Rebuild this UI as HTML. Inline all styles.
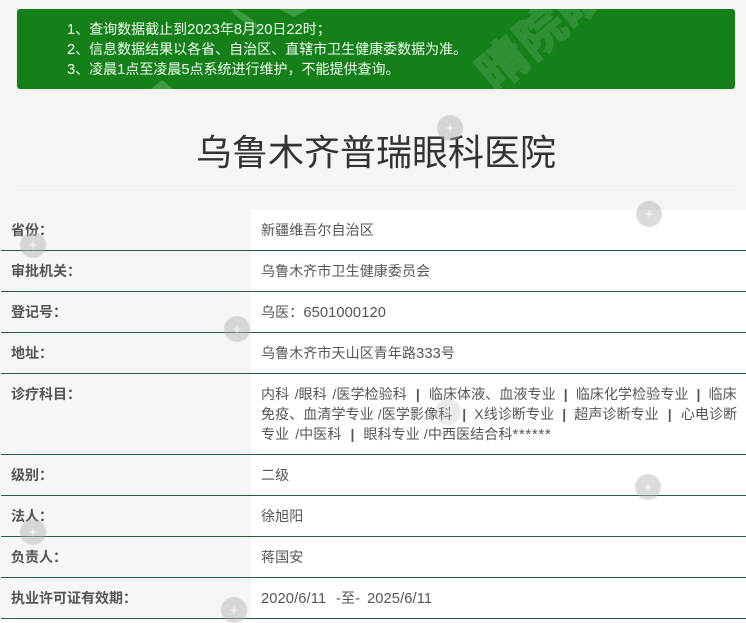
<!DOCTYPE html>
<html lang="zh">
<head>
<meta charset="utf-8">
<title>乌鲁木齐普瑞眼科医院</title>
<style>
html,body{margin:0;padding:0;background:#fff}
body{position:relative;width:746px;height:619px;overflow:hidden;font-family:"Liberation Sans","Noto Sans CJK SC",sans-serif;font-size:14px;color:#444}
.a{position:absolute;white-space:nowrap}
.top{left:0;top:0;width:746px;height:210px;background:#f5f5f5}
.left{left:0;top:210px;width:251px;height:409px;background:#f6f6f6}
.banner{left:17px;top:9px;width:718px;height:80px;background:#15801a;border-radius:3px;overflow:hidden;box-shadow:0 0 1px #bfe0bf}
.bt{left:67px;color:#f0fff0;line-height:20px;height:20px}
h1{margin:0;font-weight:400;font-size:36px;line-height:46px;color:#333;left:196px;top:130px}
.hr{left:15px;top:189px;width:721px;height:1px;background:#eee}
.line{left:1px;width:745px;height:1px;background:#2b5f45}
.l{left:11px;font-weight:700;color:#555;font-size:14px;line-height:20px}
.v{left:261px;color:#555;line-height:20px;letter-spacing:.1px}
.n{font-size:14.7px}
.wm{position:absolute;width:26px;height:26px;border-radius:50%;background:rgba(175,175,175,.45);filter:blur(.5px)}
.wm:after{content:"";position:absolute;left:8px;top:8px;width:10px;height:10px;background:#f0f0f0;clip-path:polygon(50% 0,60% 40%,100% 50%,60% 60%,50% 100%,40% 60%,0 50%,40% 40%)}
.gw{color:#2f9036;font-weight:700;font-size:48px;line-height:50px;transform:rotate(-40deg);transform-origin:center;-webkit-text-stroke:2px #2f9036}
.sep{font-weight:700;display:inline-block}
</style>
</head>
<body>
<div class="a top"></div>
<div class="a left"></div>

<div class="a banner">
  <svg class="a" style="left:0;top:0" width="718" height="80">
    <path d="M218 0 Q236 8 245 22 Q228 16 214 2Z" fill="#3c9a41"/>
    <path d="M262 0 L277 8 L292 0Z" fill="#3c9a41"/>
    <path d="M134 80 L145 71 L156 80Z" fill="#3c9a41"/>
  </svg>
  <div class="a gw" style="left:463px;top:32px">晴</div>
  <div class="a gw" style="left:501px;top:0">院</div>
  <div class="a gw" style="left:539px;top:-32px">眼</div>
</div>

<div class="a bt" style="top:19px"><span class="n">1</span>、查询数据截止到<span class="n">2023</span>年<span class="n">8</span>月<span class="n">20</span>日<span class="n">22</span>时；</div>
<div class="a bt" style="top:39px"><span class="n">2</span>、信息数据结果以各省、自治区、直辖市卫生健康委数据为准。</div>
<div class="a bt" style="top:59px"><span class="n">3</span>、凌晨<span class="n">1</span>点至凌晨<span class="n">5</span>点系统进行维护，不能提供查询。</div>

<h1 class="a">乌鲁木齐普瑞眼科医院</h1>
<div class="a hr"></div>

<div class="a line" style="top:250px"></div>
<div class="a line" style="top:291px"></div>
<div class="a line" style="top:332px"></div>
<div class="a line" style="top:373px"></div>
<div class="a line" style="top:454px"></div>
<div class="a line" style="top:495px"></div>
<div class="a line" style="top:536px"></div>
<div class="a line" style="top:577px"></div>
<div class="a line" style="top:618px"></div>

<div class="a l" style="top:220px">省份：</div>
<div class="a l" style="top:261px">审批机关：</div>
<div class="a l" style="top:302px">登记号：</div>
<div class="a l" style="top:343px">地址：</div>
<div class="a l" style="top:384px">诊疗科目：</div>
<div class="a l" style="top:465px">级别：</div>
<div class="a l" style="top:506px">法人：</div>
<div class="a l" style="top:547px">负责人：</div>
<div class="a l" style="top:588px">执业许可证有效期：</div>

<div class="a v" style="top:220px">新疆维吾尔自治区</div>
<div class="a v" style="top:261px">乌鲁木齐市卫生健康委员会</div>
<div class="a v" style="top:302px">乌医：<span class="n">6501000120</span></div>
<div class="a v" style="top:343px">乌鲁木齐市天山区青年路<span class="n">333</span>号</div>
<div class="a v" style="top:384px"><span style="word-spacing:1.5px">内科 /眼科 /医学检验科</span> &nbsp;<span class="sep" style="margin-left:1px">|</span>&nbsp; <span style="margin-left:1px">临床体液、血液专业</span> &nbsp;<span class="sep">|</span>&nbsp; 临床化学检验专业 &nbsp;<span class="sep">|</span>&nbsp; 临床</div>
<div class="a v" style="top:404px">免疫、血清学专业 /医学影像科 &nbsp;<span class="sep" style="margin-left:2px">|</span>&nbsp; X线诊断专业 &nbsp;<span class="sep">|</span>&nbsp; 超声诊断专业 &nbsp;<span class="sep" style="margin-left:1px">|</span>&nbsp; <span style="margin-left:1px">心电诊断</span></div>
<div class="a v" style="top:424px"><span style="word-spacing:2px">专业 /中医科</span> &nbsp;<span class="sep" style="margin-left:1px">|</span>&nbsp; <span style="margin-left:1px">眼科专业 /中西医结合科</span><span class="n" style="letter-spacing:.8px">******</span></div>
<div class="a v" style="top:465px">二级</div>
<div class="a v" style="top:506px">徐旭阳</div>
<div class="a v" style="top:547px">蒋国安</div>
<div class="a v" style="top:588px"><span class="n">2020/6/11</span></div>
<div class="a v" style="top:588px;left:336px"><span class="n">-</span>至<span class="n">-</span></div>
<div class="a v" style="top:588px;left:367px"><span class="n">2025/6/11</span></div>

<div class="wm" style="left:437px;top:115px"></div>
<div class="wm" style="left:636px;top:201px"></div>
<div class="wm" style="left:20px;top:232px"></div>
<div class="wm" style="left:224px;top:316px"></div>
<div class="wm" style="left:435px;top:399px;opacity:.6"></div>
<div class="wm" style="left:635px;top:474px"></div>
<div class="wm" style="left:20px;top:519px"></div>
<div class="wm" style="left:221px;top:597px"></div>
</body>
</html>
